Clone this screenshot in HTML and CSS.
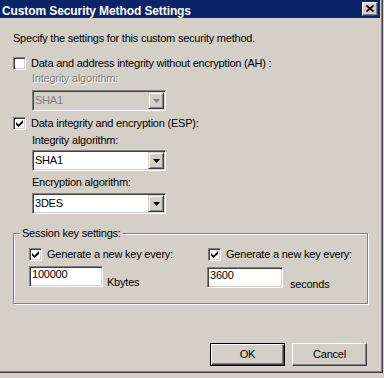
FILE: index.html
```html
<!DOCTYPE html>
<html>
<head>
<meta charset="utf-8">
<link rel="stylesheet" href="styles.css">
</head>
<body>
<div class="window">
  <div class="frame">
    <div class="titlebar">
      <span class="title">Custom Security Method Settings</span>
      <span class="close"><svg width="8" height="7" viewBox="0 0 8 7"><path d="M0.5 0.5 L7.5 6.5 M7.5 0.5 L0.5 6.5" stroke="#000" stroke-width="1.7" fill="none"/></svg></span>
    </div>
    <div class="content">
      <p class="intro">Specify the settings for this custom security method.</p>

      <div class="check row-ah">
        <span class="box"></span>
        <span class="check-label">Data and address integrity without encryption (AH) :</span>
      </div>
      <div class="indent">
        <div class="label disabled lbl-ah">Integrity algorithm:</div>
        <div class="combo is-disabled combo-ah">
          <span class="value">SHA1</span>
          <span class="dd"><svg width="7" height="4" viewBox="0 0 7 4"><polygon points="0,0 7,0 3.5,4" fill="#808080"/></svg></span>
        </div>
      </div>

      <div class="check row-esp">
        <span class="box"><svg width="7" height="7" viewBox="0 0 7 7"><polygon points="0,2 2.5,4.5 7,0 7,3 2.5,7 0,4.5" fill="#000"/></svg></span>
        <span class="check-label">Data integrity and encryption (ESP):</span>
      </div>
      <div class="indent">
        <div class="label lbl-int">Integrity algorithm:</div>
        <div class="combo combo-int">
          <span class="value">SHA1</span>
          <span class="dd"><svg width="7" height="4" viewBox="0 0 7 4"><polygon points="0,0 7,0 3.5,4" fill="#000"/></svg></span>
        </div>
        <div class="label lbl-enc">Encryption algorithm:</div>
        <div class="combo combo-enc">
          <span class="value">3DES</span>
          <span class="dd"><svg width="7" height="4" viewBox="0 0 7 4"><polygon points="0,0 7,0 3.5,4" fill="#000"/></svg></span>
        </div>
      </div>

      <div class="group">
        <div class="group-title">Session key settings:</div>
        <div class="group-grid">
          <div class="col col-1">
            <div class="check">
              <span class="box"><svg width="7" height="7" viewBox="0 0 7 7"><polygon points="0,2 2.5,4.5 7,0 7,3 2.5,7 0,4.5" fill="#000"/></svg></span>
              <span class="check-label">Generate a new key every:</span>
            </div>
            <div class="field-row">
              <div class="textbox tb-1">100000</div>
              <span class="unit unit-1">Kbytes</span>
            </div>
          </div>
          <div class="col col-2">
            <div class="check">
              <span class="box"><svg width="7" height="7" viewBox="0 0 7 7"><polygon points="0,2 2.5,4.5 7,0 7,3 2.5,7 0,4.5" fill="#000"/></svg></span>
              <span class="check-label">Generate a new key every:</span>
            </div>
            <div class="field-row row-2">
              <div class="textbox tb-2">3600</div>
              <span class="unit unit-2">seconds</span>
            </div>
          </div>
        </div>
      </div>

      <div class="buttons">
        <button class="btn default">OK</button>
        <button class="btn">Cancel</button>
      </div>
    </div>
  </div>
</div>
</body>
</html>
```

FILE: styles.css
```css
html {
  background: #D4D0C8;
}
body {
  margin: 0;
  font-family: "Liberation Sans", Arial, sans-serif;
  font-size: 11px;
  line-height: 13px;
  letter-spacing: -0.22px;
  color: #000;
}
.window {
  width: 383px;
  height: 373px;
  box-sizing: border-box;
  border-right: 1px solid #404040;
  border-bottom: 1px solid #404040;
  background: #D4D0C8;
}
.frame {
  height: 100%;
  box-sizing: border-box;
  border-right: 1px solid #808080;
  border-bottom: 1px solid #808080;
  padding-right: 1px;
  display: flex;
  flex-direction: column;
}
.titlebar {
  height: 18px;
  background: #0A246A;
  display: flex;
  align-items: flex-start;
}
.title {
  color: #fff;
  font-weight: bold;
  font-size: 12px;
  line-height: 14px;
  letter-spacing: -0.1px;
  padding: 4px 0 0 2px;
}
.close {
  margin: 2px 2px 0 auto;
  width: 16px;
  height: 14px;
  box-sizing: border-box;
  background: #D4D0C8;
  border: 1px solid;
  border-color: #fff #404040 #404040 #fff;
  box-shadow: inset -1px -1px 0 #808080;
  display: flex;
  align-items: center;
  justify-content: center;
  padding: 0 1px 1px 0;
}
.close svg {
  display: block;
}
.content {
  padding-left: 13px;
}
.intro {
  margin: 14px 0 0;
}
.check {
  display: flex;
  align-items: center;
  gap: 5px;
  height: 13px;
}
.row-ah {
  margin-top: 12px;
}
.row-esp {
  margin-top: 6px;
}
.box {
  width: 13px;
  height: 13px;
  box-sizing: border-box;
  border: 1px solid;
  border-color: #808080 #fff #fff #808080;
  box-shadow: inset 1px 1px 0 #404040, inset -1px -1px 0 #D4D0C8;
  background: #fff;
  display: flex;
  align-items: center;
  justify-content: center;
  flex: none;
}
.box svg {
  display: block;
}
.indent {
  margin-left: 19px;
}
.label.disabled {
  color: #808080;
  text-shadow: 1px 1px 0 #fff;
}
.lbl-ah { margin-top: 2px; }
.combo-ah { margin-top: 5px; }
.lbl-int { margin-top: 4px; }
.combo-int { margin-top: 3px; }
.lbl-enc { margin-top: 5px; }
.combo-enc { margin-top: 4px; }
.combo {
  width: 134px;
  height: 21px;
  box-sizing: border-box;
  border: 1px solid;
  border-color: #808080 #fff #fff #808080;
  box-shadow: inset 1px 1px 0 #404040, inset -1px -1px 0 #D4D0C8;
  padding: 1px;
  background: #fff;
  display: flex;
}
.combo.is-disabled {
  background: #D4D0C8;
  color: #808080;
}
.combo .value {
  flex: 1;
  padding: 2px 0 0 1px;
}
.dd {
  width: 16px;
  box-sizing: border-box;
  background: #D4D0C8;
  border: 1px solid;
  border-color: #D4D0C8 #404040 #404040 #D4D0C8;
  box-shadow: inset 1px 1px 0 #fff, inset -1px -1px 0 #808080;
  display: flex;
  align-items: center;
  justify-content: center;
  padding: 1px 0 0 0;
}
.dd svg {
  display: block;
}
.group {
  margin-top: 19px;
  width: 355px;
  box-sizing: border-box;
  border: 1px solid #808080;
  box-shadow: 1px 1px 0 #fff, inset 1px 1px 0 #fff;
  padding-bottom: 12px;
}
.group-title {
  margin: -7px 0 0 6px;
  padding: 0 2px;
  background: #D4D0C8;
  width: fit-content;
}
.group-grid {
  margin: 8px 0 0 15px;
  display: grid;
  grid-template-columns: 178px auto;
}
.col-2 .check {
  margin-left: 1px;
}
.field-row {
  display: flex;
  align-items: flex-start;
  margin-top: 5px;
}
.field-row.row-2 {
  margin-top: 6px;
}
.textbox {
  height: 21px;
  box-sizing: border-box;
  border: 1px solid;
  border-color: #808080 #fff #fff #808080;
  box-shadow: inset 1px 1px 0 #404040, inset -1px -1px 0 #D4D0C8;
  background: #fff;
  padding: 1px 0 0 2px;
}
.tb-1 { width: 74px; }
.tb-2 { width: 76px; }
.unit-1 {
  margin-left: 4px;
  padding-top: 10px;
}
.unit-2 {
  margin-left: 7px;
  padding-top: 11px;
}
.buttons {
  margin-top: 39px;
  padding-right: 13px;
  display: flex;
  justify-content: flex-end;
  gap: 7px;
}
.btn {
  width: 75px;
  height: 23px;
  box-sizing: border-box;
  margin: 0;
  padding: 0;
  font: inherit;
  letter-spacing: inherit;
  color: #000;
  background: #D4D0C8;
  border: 1px solid;
  border-color: #fff #404040 #404040 #fff;
  box-shadow: inset -1px -1px 0 #808080;
  appearance: none;
  line-height: 13px;
}
.btn.default {
  border: 1px solid #000;
  box-shadow: inset 1px 1px 0 #fff, inset -1px -1px 0 #404040, inset -2px -2px 0 #808080;
}
```
